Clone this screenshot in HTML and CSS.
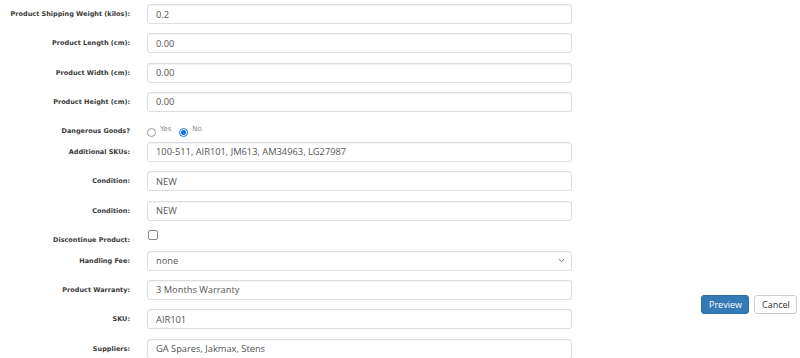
FILE: index.html
```html
<!DOCTYPE html>
<html lang="en">
<head>
<meta charset="utf-8">
<title>Product form</title>
<link rel="stylesheet" href="styles.css">
</head>
<body>
<div class="page">
  <form class="form">
    <div class="row">
      <label class="lbl">Product Shipping Weight (kilos):</label>
      <div class="field"><input class="ctl" type="text" value="0.2"></div>
    </div>
    <div class="row">
      <label class="lbl">Product Length (cm):</label>
      <div class="field"><input class="ctl" type="text" value="0.00"></div>
    </div>
    <div class="row">
      <label class="lbl">Product Width (cm):</label>
      <div class="field"><input class="ctl" type="text" value="0.00"></div>
    </div>
    <div class="row">
      <label class="lbl">Product Height (cm):</label>
      <div class="field"><input class="ctl" type="text" value="0.00"></div>
    </div>
    <div class="row row-small">
      <label class="lbl">Dangerous Goods?</label>
      <div class="field radios">
        <span class="radio"></span><span class="rtext">Yes</span>
        <span class="radio on"></span><span class="rtext">No</span>
      </div>
    </div>
    <div class="row">
      <label class="lbl">Additional SKUs:</label>
      <div class="field"><input class="ctl" type="text" value="100-511, AIR101, JM613, AM34963, LG27987"></div>
    </div>
    <div class="row">
      <label class="lbl">Condition:</label>
      <div class="field"><input class="ctl" type="text" value="NEW"></div>
    </div>
    <div class="row">
      <label class="lbl">Condition:</label>
      <div class="field"><input class="ctl" type="text" value="NEW"></div>
    </div>
    <div class="row row-small">
      <label class="lbl">Discontinue Product:</label>
      <div class="field"><span class="check"></span></div>
    </div>
    <div class="row">
      <label class="lbl">Handling Fee:</label>
      <div class="field">
        <div class="ctl select">
          <span>none</span>
          <svg class="chev" width="7" height="5" viewBox="0 0 7 5"><path d="M1 1.2 L3.5 3.6 L6 1.2" fill="none" stroke="#777" stroke-width="1"/></svg>
        </div>
      </div>
    </div>
    <div class="row">
      <label class="lbl">Product Warranty:</label>
      <div class="field"><input class="ctl" type="text" value="3 Months Warranty"></div>
    </div>
    <div class="row">
      <label class="lbl">SKU:</label>
      <div class="field"><input class="ctl" type="text" value="AIR101"></div>
    </div>
    <div class="row">
      <label class="lbl">Suppliers:</label>
      <div class="field"><input class="ctl" type="text" value="GA Spares, Jakmax, Stens"></div>
    </div>
  </form>
  <div class="actions">
    <button class="btn btn-primary" type="button">Preview</button>
    <button class="btn btn-default" type="button">Cancel</button>
  </div>
</div>
</body>
</html>
```
FILE: styles.css
```css
html, body {
  margin: 0;
  padding: 0;
  background: #fff;
}
body {
  width: 800px;
  height: 358px;
  overflow: hidden;
}
.page {
  display: flex;
  padding-top: 4px;
}
.form {
  display: flex;
  flex-direction: column;
  gap: 9.33px;
  width: 580px;
}
.row {
  display: flex;
  align-items: flex-start;
  height: 20px;
}
.row-small {
  height: 11.33px;
}
.lbl {
  width: 130px;
  flex: none;
  text-align: right;
  font-family: "DejaVu Sans", Verdana, sans-serif;
  font-weight: bold;
  font-size: 6.5px;
  line-height: 17px;
  padding-top: 2px;
  color: #3a3a3a;
  white-space: nowrap;
}
.field {
  margin-left: 17px;
  width: 425px;
  flex: none;
}
.ctl {
  box-sizing: border-box;
  display: block;
  width: 425px;
  height: 20px;
  margin: 0;
  padding: 0 8px;
  border: 1px solid #ddd;
  border-radius: 3px;
  box-shadow: inset 0 1px 1px rgba(0,0,0,0.05);
  background: #fff;
  font-family: "Open Sans", sans-serif;
  font-size: 9.3px;
  color: #555;
  outline: none;
}
.select {
  display: flex;
  align-items: center;
  justify-content: space-between;
  padding-right: 6px;
}
.radios {
  display: flex;
  align-items: flex-start;
  padding-top: 7px;
}
.radio {
  box-sizing: border-box;
  width: 9px;
  height: 9px;
  border: 1px solid #999;
  border-radius: 50%;
  background: #fff;
  flex: none;
}
.radio.on {
  border: 1.5px solid #1a73e8;
  background: radial-gradient(circle, #1a73e8 0 2.2px, #fff 2.6px);
}
.rtext {
  font-family: "DejaVu Sans", Verdana, sans-serif;
  font-size: 7px;
  color: #888;
  line-height: 7px;
  margin: -2px 8px 0 4px;
}
.check {
  display: block;
  box-sizing: border-box;
  width: 10px;
  height: 10px;
  margin: 0 0 0 1px;
  border: 1px solid #8a8a8a;
  border-radius: 2px;
  background: #fff;
}
.actions {
  display: flex;
  gap: 5px;
  margin-left: auto;
  padding-top: 291px;
  padding-right: 3px;
  align-items: flex-start;
}
.btn {
  box-sizing: border-box;
  height: 19px;
  padding: 0 7px;
  border-radius: 3px;
  font-family: "Open Sans", sans-serif;
  font-size: 9px;
  line-height: 17px;
  cursor: pointer;
}
.btn-primary {
  width: 48px;
  background: #337ab7;
  border: 1px solid #2e6da4;
  color: #fff;
}
.btn-default {
  width: 43px;
  background: #fff;
  border: 1px solid #ccc;
  color: #333;
}
```
